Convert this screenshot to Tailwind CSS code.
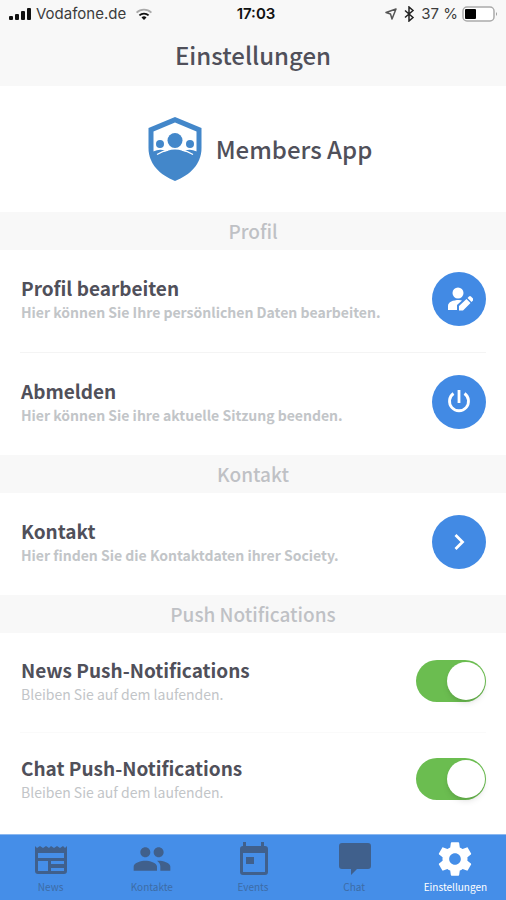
<!DOCTYPE html>
<html lang="de">
<head>
    <meta charset="UTF-8">
    <meta name="viewport" content="width=device-width, initial-scale=1.0">
    <title>Einstellungen - Members App</title>
    <script src="https://cdn.jsdelivr.net/npm/@tailwindcss/browser@4"></script>
</head>
<body class="min-h-screen flex flex-col bg-white font-['Noto_Sans_CJK_JP',sans-serif] text-[#50505a]">
    <!-- Header -->
    <header class="bg-[#f8f8f8] pb-3">
        <div class="grid grid-cols-3 items-center h-7 px-2 font-['Inter',sans-serif] text-[15px] leading-5 text-[#3c3c3c]">
            <div class="flex items-center gap-1">
                <svg class="w-6 h-3 shrink-0" viewBox="0 0 24 12" fill="#111">
                    <rect x="1" y="8" width="4" height="4" rx="1"/>
                    <rect x="7" y="6" width="4" height="6" rx="1"/>
                    <rect x="13" y="3" width="4" height="9" rx="1"/>
                    <rect x="19" y="0" width="4" height="12" rx="1"/>
                </svg>
                <span class="whitespace-nowrap">Vodafone.de</span>
                <svg class="w-5 h-3 ml-1 shrink-0" viewBox="0 0 20 13" fill="none" stroke-width="2">
                    <path d="M2 5a11.500 11.500 0 0 1 16 0" stroke="#aaa"/>
                    <path d="M5 8a7.500 7.500 0 0 1 10 0" stroke="#111"/>
                    <path d="M7.300 10.300a4 4 0 0 1 5.400 0L10 13z" fill="#111"/>
                </svg>
            </div>
            <div class="text-center font-semibold text-[#111] pl-1.5">17:03</div>
            <div class="flex items-center justify-end gap-1">
                <svg class="w-3 h-3 shrink-0" viewBox="0 0 12 12" fill="none" stroke="#555" stroke-width="1.500" stroke-linejoin="round">
                    <path d="M11 1 1 4.500l4.500 1.500L7 11z"/>
                </svg>
                <svg class="w-4 h-4 shrink-0" viewBox="0 0 16 16" fill="none" stroke="#222" stroke-width="1.500">
                    <path d="M4 4.500 12 11.500 8 15V1l4 3.500L4 11.500"/>
                </svg>
                <span class="whitespace-nowrap">37 %</span>
                <svg class="w-9 h-4 shrink-0" viewBox="0 0 36 16">
                    <rect x="1" y="1" width="31" height="14" rx="4" fill="#fff" stroke="#aaa" stroke-width="1.500"/>
                    <rect x="3" y="3" width="11" height="10" rx="1" fill="#000"/>
                    <path d="M34 6v4q2-2 0-4" fill="#999"/>
                </svg>
            </div>
        </div>
        <h1 class="pt-2 text-center text-[24px] leading-[38px] font-medium">Einstellungen</h1>
    </header>

    <main class="flex-1">
        <div class="flex items-center justify-center gap-3.5 h-[126px] pl-3.5">
            <svg class="w-[54px] h-16 shrink-0" viewBox="0 0 54 64">
                <path d="M27 0 53.500 11V31C53.500 47 42 58 27 64 12 58 .500 47 .500 31V11z" fill="#4387ca"/>
                <path d="M27 5.500 48.500 14.500V34.500H5.500V14.500z" fill="#fff"/>
                <path d="M12 37Q27 28 42 37z" fill="#4387ca"/>
                <path d="M5.500 34.500Q11 31.500 17 33.500L10 38H5.500zM48.500 34.500Q43 31.500 37 33.500L44 38H48.500z" fill="#4387ca"/>
                <path d="M9 37.500Q15 34 20 33M45 37.500Q39 34 34 33" fill="none" stroke="#fff" stroke-width="1.300"/>
                <circle cx="27" cy="23.500" r="7.500" fill="#4387ca"/>
                <circle cx="12" cy="27" r="4" fill="#4387ca"/>
                <circle cx="42" cy="27" r="4" fill="#4387ca"/>
            </svg>
            <span class="text-[24px] leading-8 font-medium">Members App</span>
        </div>

        <h2 class="bg-[#f8f8f8] text-center text-[19px] leading-[38px] font-medium text-[#bfc1c5]">Profil</h2>
        <div class="flex justify-between mx-5 pt-[22px] pb-[26px] border-b border-[#f4f4f4]">
            <div class="pt-0.5 pl-px">
                <h3 class="text-[19px] leading-7 font-bold">Profil bearbeiten</h3>
                <p class="text-[14px] leading-5 font-bold text-[#c2c5c8]">Hier können Sie Ihre persönlichen Daten bearbeiten.</p>
            </div>
            <button type="button" aria-label="Profil bearbeiten" class="flex items-center justify-center size-[54px] shrink-0 rounded-full bg-[#428ae4] text-white">
                <svg class="size-7" viewBox="0 0 28 28" fill="currentColor">
                    <circle cx="13" cy="8" r="5.500"/>
                    <path d="M3 25v-4c0-4 5-6 11-6l3 .500L12 20v5z"/>
                    <path d="M14 25.500v-4.500l7.500-7 4 4L18 25.500zM22.500 13l1.500-1.500q1-1 2 0l2 2q1 1 0 2L26.500 17z"/>
                </svg>
            </button>
        </div>
        <div class="flex justify-between mx-5 pt-[22px] pb-[26px]">
            <div class="pt-0.5 pl-px">
                <h3 class="text-[19px] leading-7 font-bold">Abmelden</h3>
                <p class="text-[14px] leading-5 font-bold text-[#c2c5c8]">Hier können Sie ihre aktuelle Sitzung beenden.</p>
            </div>
            <button type="button" aria-label="Abmelden" class="flex items-center justify-center size-[54px] shrink-0 rounded-full bg-[#428ae4] text-white">
                <svg class="size-7" viewBox="0 0 28 28" fill="none" stroke="currentColor" stroke-width="2.800">
                    <path d="M14 2v13M8.500 5.500a9.500 9.500 0 1 0 11 0"/>
                </svg>
            </button>
        </div>

        <h2 class="bg-[#f8f8f8] text-center text-[19px] leading-[38px] font-medium text-[#bfc1c5]">Kontakt</h2>
        <div class="flex justify-between mx-5 pt-[22px] pb-[26px]">
            <div class="pt-0.5 pl-px">
                <h3 class="text-[19px] leading-7 font-bold">Kontakt</h3>
                <p class="text-[14px] leading-5 font-bold text-[#c2c5c8]">Hier finden Sie die Kontaktdaten ihrer Society.</p>
            </div>
            <button type="button" aria-label="Kontakt" class="flex items-center justify-center size-[54px] shrink-0 rounded-full bg-[#428ae4] text-white">
                <svg class="size-7" viewBox="0 0 28 28" fill="none" stroke="currentColor" stroke-width="2.800">
                    <path d="m10.500 7 7 7-7 7"/>
                </svg>
            </button>
        </div>

        <h2 class="bg-[#f8f8f8] text-center text-[19px] leading-[38px] font-medium text-[#bfc1c5]">Push Notifications</h2>
        <div class="flex justify-between mx-5 pt-[27px] pb-7 border-b border-[#fafafa]">
            <label for="newsPush" class="-mt-1 pl-px">
                <span class="block text-[19px] leading-7 font-bold">News Push-Notifications</span>
                <span class="block text-[14px] leading-5 text-[#c2c5c8]">Bleiben Sie auf dem laufenden.</span>
            </label>
            <input type="checkbox" role="switch" id="newsPush" checked class="flex items-center appearance-none w-[70px] h-[42px] p-px shrink-0 rounded-full bg-gray-300 checked:bg-[#6bbd50] before:size-[38px] before:rounded-full before:bg-white before:shadow-md checked:before:ml-auto">
        </div>
        <div class="flex justify-between mx-5 pt-[25px] pb-7">
            <label for="chatPush" class="-mt-1 pl-px">
                <span class="block text-[19px] leading-7 font-bold">Chat Push-Notifications</span>
                <span class="block text-[14px] leading-5 text-[#c2c5c8]">Bleiben Sie auf dem laufenden.</span>
            </label>
            <input type="checkbox" role="switch" id="chatPush" checked class="flex items-center appearance-none w-[70px] h-[42px] p-px shrink-0 rounded-full bg-gray-300 checked:bg-[#6bbd50] before:size-[38px] before:rounded-full before:bg-white before:shadow-md checked:before:ml-auto">
        </div>
    </main>

    <!-- Tab bar -->
    <nav class="grid grid-cols-5 h-[66px] bg-[#458ee8] border-t border-[#8bb8f0] text-[10px] leading-4 text-[#3d6ca6]">
        <a href="#news" class="flex flex-col items-center pt-1">
            <svg class="size-10" viewBox="0 0 40 40" fill="#40608c">
                <path fill-rule="evenodd" d="M4 7l2 2 3-2 3 2 3-2 3 2 2-2 3 2 3-2 3 2 3-2 2 2 2-2v25q0 3-3 3H7q-3 0-3-3zM7 14v5h26v-5zM7 22v10h10V22zM20 22v3h13v-3zM20 29v3h13v-3z"/>
            </svg>
            News
        </a>
        <a href="#kontakte" class="flex flex-col items-center pt-1">
            <svg class="size-10" viewBox="0 0 24 24" fill="#40608c">
                <path d="M16 11c1.660 0 2.990-1.340 2.990-3S17.660 5 16 5s-3 1.340-3 3 1.340 3 3 3zm-8 0c1.660 0 2.990-1.340 2.990-3S9.660 5 8 5 5 6.340 5 8s1.340 3 3 3zm0 2c-2.330 0-7 1.170-7 3.500V19h14v-2.500c0-2.330-4.670-3.500-7-3.500zm8 0c-.290 0-.620.020-.970.050 1.160.840 1.970 1.970 1.970 3.450V19h6v-2.500c0-2.330-4.670-3.500-7-3.500z"/>
            </svg>
            Kontakte
        </a>
        <a href="#events" class="flex flex-col items-center pt-1">
            <svg class="size-10" viewBox="0 0 40 40" fill="#40608c">
                <path fill-rule="evenodd" d="M10 3h3v4h15V3h3v4h1q3 0 3 3v23q0 3-3 3H10q-3 0-3-3V10q0-3 3-3zM10 14v19h22V14zM13 18h8v7h-8z"/>
            </svg>
            Events
        </a>
        <a href="#chat" class="flex flex-col items-center pt-1">
            <svg class="size-10" viewBox="0 0 40 40" fill="#40608c">
                <path d="M8 4h26q3 0 3 3v20q0 3-3 3H23l-6 6v-6H8q-3 0-3-3V7q0-3 3-3z"/>
            </svg>
            Chat
        </a>
        <a href="#einstellungen" class="flex flex-col items-center pt-1 text-white" aria-current="page">
            <svg class="size-10" viewBox="0 0 24 24" fill="currentColor">
                <path d="M19.430 12.980c.040-.320.070-.640.070-.980s-.030-.660-.070-.980l2.110-1.650c.190-.150.240-.420.120-.640l-2-3.460c-.120-.220-.390-.300-.610-.220l-2.490 1c-.520-.400-1.080-.730-1.690-.980l-.380-2.650C14.460 2.180 14.250 2 14 2h-4c-.250 0-.460.180-.490.420l-.380 2.650c-.610.250-1.170.590-1.690.980l-2.490-1c-.230-.090-.490 0-.610.220l-2 3.460c-.130.220-.070.490.120.640l2.110 1.650c-.040.320-.070.650-.070.980s.030.660.070.980l-2.110 1.650c-.190.150-.240.420-.120.640l2 3.460c.120.220.390.300.610.220l2.490-1c.520.400 1.080.730 1.690.980l.380 2.650c.030.240.240.420.490.420h4c.250 0 .460-.180.490-.420l.380-2.650c.610-.250 1.170-.590 1.690-.980l2.490 1c.230.090.490 0 .610-.220l2-3.460c.120-.220.070-.490-.120-.640zM12 15.500c-1.930 0-3.500-1.570-3.500-3.500s1.570-3.500 3.500-3.500 3.500 1.570 3.500 3.500-1.570 3.500-3.500 3.500z"/>
            </svg>
            Einstellungen
        </a>
    </nav>
</body>
</html>
